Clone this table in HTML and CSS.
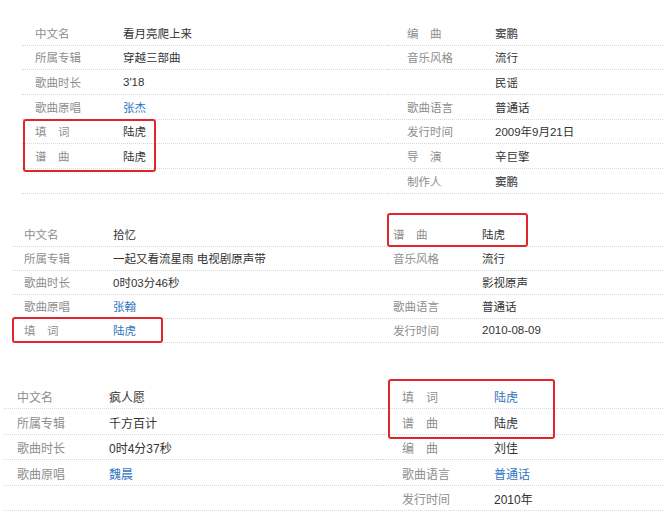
FILE: index.html
```html
<!DOCTYPE html>
<html lang="zh-CN">
<head>
<meta charset="utf-8">
<title>歌曲信息</title>
<link rel="stylesheet" href="styles.css">
</head>
<body>
<section class="sec s1">
  <dl class="col left">
    <div class="row"><dt>中文名</dt><dd>看月亮爬上来</dd></div>
    <div class="row"><dt>所属专辑</dt><dd>穿越三部曲</dd></div>
    <div class="row"><dt>歌曲时长</dt><dd>3'18</dd></div>
    <div class="row"><dt>歌曲原唱</dt><dd class="link">张杰</dd></div>
    <div class="row"><dt>填&emsp;词</dt><dd>陆虎</dd></div>
    <div class="row"><dt>谱&emsp;曲</dt><dd>陆虎</dd></div>
    <div class="row"></div>
  </dl>
  <dl class="col right">
    <div class="row"><dt>编&emsp;曲</dt><dd>窦鹏</dd></div>
    <div class="row"><dt>音乐风格</dt><dd>流行</dd></div>
    <div class="row"><dt></dt><dd>民谣</dd></div>
    <div class="row"><dt>歌曲语言</dt><dd>普通话</dd></div>
    <div class="row"><dt>发行时间</dt><dd>2009年9月21日</dd></div>
    <div class="row"><dt>导&emsp;演</dt><dd>辛巨擎</dd></div>
    <div class="row"><dt>制作人</dt><dd>窦鹏</dd></div>
  </dl>
  <div class="mark m1"></div>
</section>

<section class="sec s2">
  <dl class="col left">
    <div class="row"><dt>中文名</dt><dd>拾忆</dd></div>
    <div class="row"><dt>所属专辑</dt><dd>一起又看流星雨 电视剧原声带</dd></div>
    <div class="row"><dt>歌曲时长</dt><dd>0时03分46秒</dd></div>
    <div class="row"><dt>歌曲原唱</dt><dd class="link">张翰</dd></div>
    <div class="row"><dt>填&emsp;词</dt><dd class="link">陆虎</dd></div>
  </dl>
  <dl class="col right">
    <div class="row"><dt>谱&emsp;曲</dt><dd>陆虎</dd></div>
    <div class="row"><dt>音乐风格</dt><dd>流行</dd></div>
    <div class="row"><dt></dt><dd>影视原声</dd></div>
    <div class="row"><dt>歌曲语言</dt><dd>普通话</dd></div>
    <div class="row"><dt>发行时间</dt><dd>2010-08-09</dd></div>
  </dl>
  <div class="mark m2a"></div>
  <div class="mark m2b"></div>
</section>

<section class="sec s3">
  <dl class="col left">
    <div class="row"><dt>中文名</dt><dd>疯人愿</dd></div>
    <div class="row"><dt>所属专辑</dt><dd>千方百计</dd></div>
    <div class="row"><dt>歌曲时长</dt><dd>0时4分37秒</dd></div>
    <div class="row"><dt>歌曲原唱</dt><dd class="link">魏晨</dd></div>
    <div class="row"></div>
  </dl>
  <dl class="col right">
    <div class="row"><dt>填&emsp;词</dt><dd class="link">陆虎</dd></div>
    <div class="row"><dt>谱&emsp;曲</dt><dd>陆虎</dd></div>
    <div class="row"><dt>编&emsp;曲</dt><dd>刘佳</dd></div>
    <div class="row"><dt>歌曲语言</dt><dd class="link">普通话</dd></div>
    <div class="row"><dt>发行时间</dt><dd>2010年</dd></div>
  </dl>
  <div class="mark m3"></div>
</section>
</body>
</html>
```

FILE: styles.css
```css
html, body {
  margin: 0;
  padding: 0;
  background: #fff;
}
body {
  width: 663px;
  height: 527px;
  overflow: hidden;
  font-family: "Liberation Sans", "Noto Sans CJK SC", sans-serif;
  color: #333;
}
.sec {
  position: relative;
  display: flex;
}
.col {
  margin: 0;
  padding: 0;
}
.col.right {
  flex: 1;
}
.row {
  display: flex;
  align-items: center;
  box-sizing: border-box;
  border-bottom: 1px dotted #d6d6d6;
  white-space: nowrap;
}
dt {
  color: #8e8e8e;
  flex: none;
}
dd {
  margin: 0;
  color: #333;
}
dd.link {
  color: #2f74c0;
}
.mark {
  position: absolute;
  box-sizing: border-box;
  border: 2.5px solid #e0262a;
  border-radius: 3px;
}

/* section 1 */
.s1 {
  padding: 21px 0 0 22px;
  font-size: 11.5px;
}
.s1 .col.left { width: 366px; }
.s1 .row { height: 24.67px; }
.s1 dt { width: 88px; padding-left: 13px; }
.s1 .right dt { padding-left: 19px; }
.m1 { left: 23px; top: 119px; width: 133px; height: 53px; }

/* section 2 */
.s2 {
  margin-top: 29px;
  padding-left: 13px;
  font-size: 11.5px;
}
.s2 .col.left { width: 363px; }
.s2 .row { height: 24px; }
.s2 dt { width: 89px; padding-left: 11px; }
.s2 .right dt { padding-left: 17px; }
.m2a { left: 12px; top: 94px; width: 151px; height: 26px; }
.m2b { left: 387px; top: -10px; width: 141px; height: 34px; }

/* section 3 */
.s3 {
  margin-top: 41px;
  padding-left: 4px;
  font-size: 12px;
}
.s3 .col.left { width: 379px; }
.s3 .row { height: 25.5px; padding-top: 2px; }
.s3 dt { width: 92px; padding-left: 13px; }
.s3 .right dt { padding-left: 19px; }
.m3 { left: 388px; top: -5px; width: 167px; height: 60px; }
```
